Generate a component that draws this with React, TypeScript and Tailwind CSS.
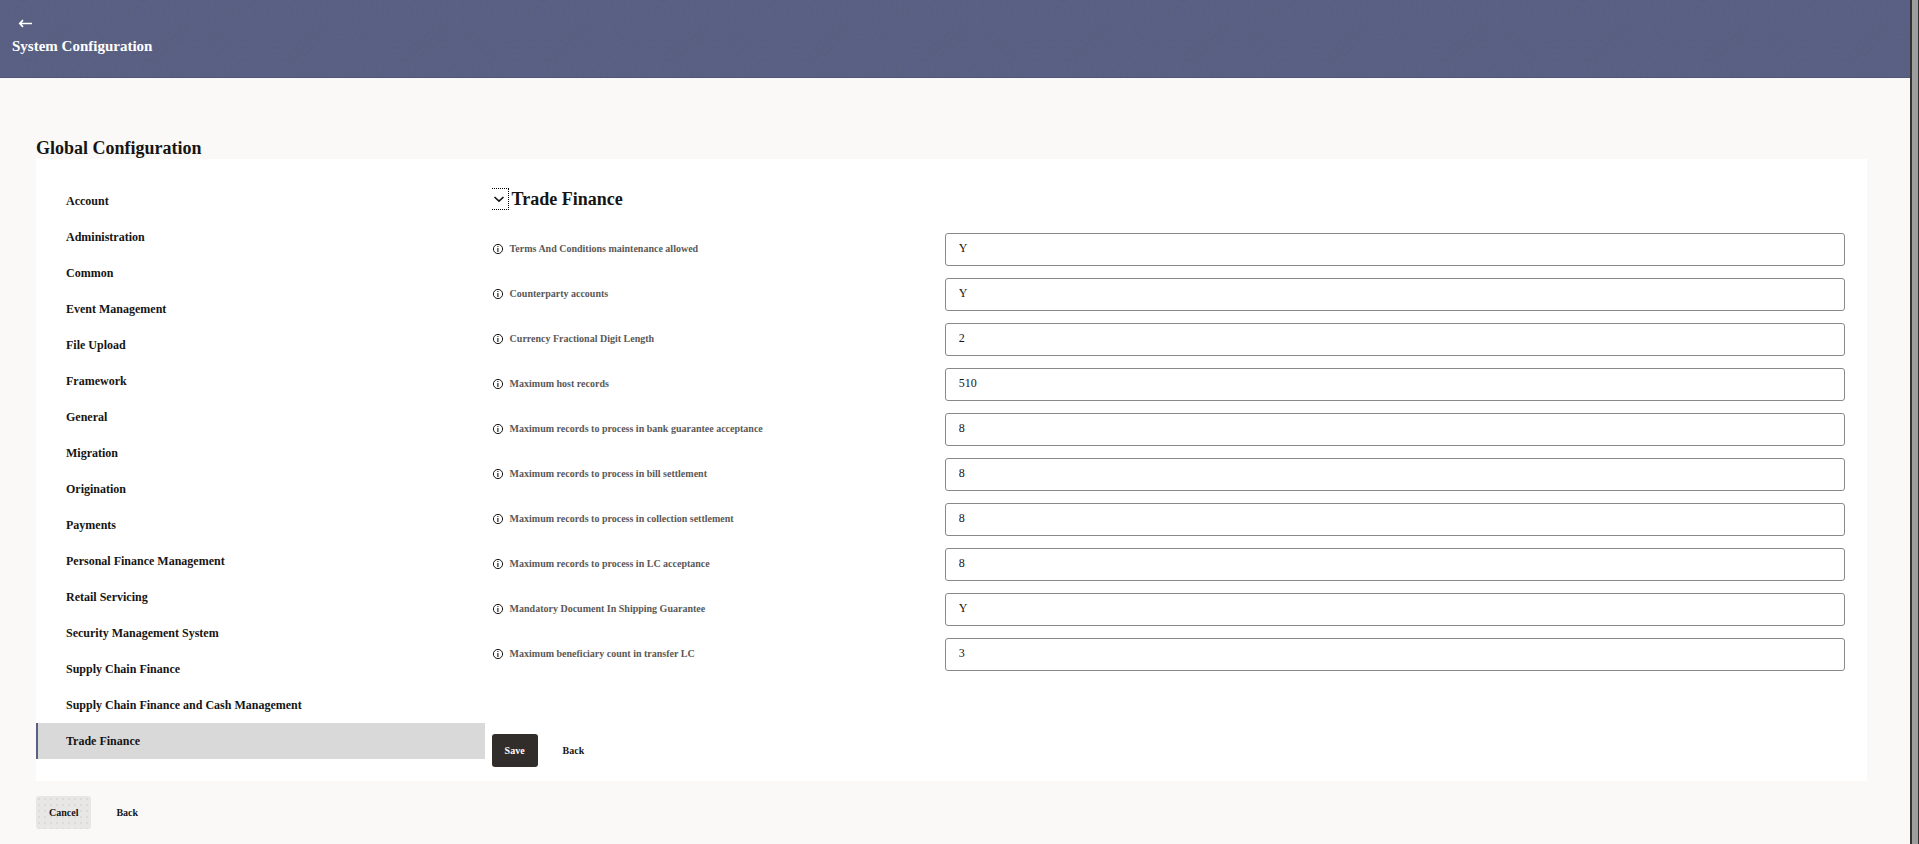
import { useState } from "react";

const categories = [
  "Account",
  "Administration",
  "Common",
  "Event Management",
  "File Upload",
  "Framework",
  "General",
  "Migration",
  "Origination",
  "Payments",
  "Personal Finance Management",
  "Retail Servicing",
  "Security Management System",
  "Supply Chain Finance",
  "Supply Chain Finance and Cash Management",
  "Trade Finance",
];

const fields = [
  { id: "terms", label: "Terms And Conditions maintenance allowed", value: "Y" },
  { id: "counterparty", label: "Counterparty accounts", value: "Y" },
  { id: "currency", label: "Currency Fractional Digit Length", value: "2" },
  { id: "host", label: "Maximum host records", value: "510" },
  { id: "guarantee", label: "Maximum records to process in bank guarantee acceptance", value: "8" },
  { id: "bill", label: "Maximum records to process in bill settlement", value: "8" },
  { id: "collection", label: "Maximum records to process in collection settlement", value: "8" },
  { id: "lc", label: "Maximum records to process in LC acceptance", value: "8" },
  { id: "shipping", label: "Mandatory Document In Shipping Guarantee", value: "Y" },
  { id: "beneficiary", label: "Maximum beneficiary count in transfer LC", value: "3" },
];

const rippleCenters = [20, 75, 140, 190, 250];

function InfoIcon() {
  return (
    <svg width="12" height="12" viewBox="0 0 12 12" fill="none" className="shrink-0" aria-hidden="true">
      <circle cx="6" cy="6" r="4.6" stroke="#161513" strokeWidth="1" />
      <path d="M5.9 3v1.1M5.9 5v4" stroke="#161513" strokeWidth="1.1" />
    </svg>
  );
}

function HeaderTexture() {
  return (
    <svg className="absolute inset-0 h-full w-full" aria-hidden="true">
      <defs>
        <pattern id="ripples" width="260" height="78" patternUnits="userSpaceOnUse">
          <g fill="none" stroke="#535a72" strokeWidth="1" strokeDasharray="9 2" opacity="0.45">
            {rippleCenters.map((cx, i) =>
              [6, 12, 18, 24, 30, 36, 42, 48].map((r) => (
                <circle key={`${cx}-${r}`} cx={cx} cy={i % 2 === 0 ? 12 : 76} r={r} />
              )),
            )}
          </g>
        </pattern>
      </defs>
      <rect width="100%" height="100%" fill="url(#ripples)" />
    </svg>
  );
}

function Header() {
  return (
    <header className="relative h-[78px] border-b border-[#4f5678] bg-[#5a6083] text-white">
      <HeaderTexture />
      <div className="relative flex flex-col items-start px-3 pt-4">
        <button type="button" aria-label="Go back" className="ml-1.5 flex h-4 w-4 items-center">
          <svg width="16" height="16" viewBox="0 0 16 16" fill="none">
            <path d="M14 7.5H2M5 4.2 1.8 7.5 5 10.8" stroke="white" strokeWidth="1.7" />
          </svg>
        </button>
        <h1 className="mt-1 text-[15px] leading-5 font-bold">System Configuration</h1>
      </div>
    </header>
  );
}

type SidebarProps = {
  active: string;
  onSelect: (name: string) => void;
};

function Sidebar({ active, onSelect }: SidebarProps) {
  return (
    <nav aria-label="Configuration categories" className="w-[24.5%] shrink-0 pt-6 pb-[22px]">
      <ul>
        {categories.map((name) => (
          <li key={name}>
            <button
              type="button"
              onClick={() => onSelect(name)}
              className={
                name === active
                  ? "block h-9 w-full border-l-2 border-[#5a6083] bg-[#d9d9d9] pl-7 text-left text-[12px] font-bold"
                  : "block h-9 w-full border-l-2 border-transparent pl-7 text-left text-[12px] font-bold"
              }
            >
              {name}
            </button>
          </li>
        ))}
      </ul>
    </nav>
  );
}

function ConfigForm({ title }: { title: string }) {
  const [open, setOpen] = useState(true);

  return (
    <form className="flex flex-1 flex-col pt-[29px] pr-[22px] pb-3.5 pl-[7px]">
      <div className="flex items-center gap-[3px]">
        <button
          type="button"
          aria-label="Toggle section"
          aria-expanded={open}
          onClick={() => setOpen(!open)}
          className="flex h-[22px] w-[17px] items-center border border-l-0 border-dotted border-black"
        >
          <svg width="14" height="14" viewBox="0 0 14 14" fill="none">
            <path d="M2.5 5 7 9.2 11.5 5" stroke="#161513" strokeWidth="1.6" />
          </svg>
        </button>
        <h3 className="text-[18px] leading-[22px] font-bold">{title}</h3>
      </div>

      {open && (
        <div className="mt-[23px] flex flex-col gap-3">
          {fields.map((field) => (
            <div key={field.id} className="grid grid-cols-[1fr_2fr] items-center gap-[3px]">
              <div className="flex items-center gap-1.5 pb-0.5">
                <InfoIcon />
                <label htmlFor={field.id} className="text-[10px] leading-4 font-bold text-[#5b5957]">
                  {field.label}
                </label>
              </div>
              <input
                id={field.id}
                type="text"
                defaultValue={field.value}
                className="h-[33px] w-full min-w-0 rounded-[3px] border border-[#8b8986] bg-white px-[13px] pb-0.5 text-[12px]"
              />
            </div>
          ))}
        </div>
      )}

      <div className="mt-auto flex">
        <button type="submit" className="h-[33px] rounded-[3px] bg-[#312d2a] px-[13px] text-[10px] font-bold text-white">
          Save
        </button>
        <button type="button" className="ml-3 h-[33px] px-[13px] text-[10px] font-bold">
          Back
        </button>
      </div>
    </form>
  );
}

export default function App() {
  const [active, setActive] = useState("Trade Finance");

  return (
    <div className="flex min-h-screen bg-[#fbf9f8] font-['Liberation_Serif',serif] text-[#161513]">
      <div className="min-w-0 flex-1">
        <Header />
        <main className="pt-[60px] pr-[43px] pb-[15px] pl-9">
          <h2 className="text-[18px] leading-[21px] font-bold">Global Configuration</h2>
          <div className="flex bg-white">
            <Sidebar active={active} onSelect={setActive} />
            <ConfigForm title={active} />
          </div>
          <div className="mt-[15px] flex">
            <button
              type="button"
              className="h-[33px] rounded-[3px] bg-[#e9e7e6] bg-[radial-gradient(#dddbda_1px,transparent_1px)] bg-[length:6px_6px] px-[13px] text-[10px] font-bold"
            >
              Cancel
            </button>
            <button type="button" className="ml-3 h-[33px] px-[13px] text-[10px] font-bold">
              Back
            </button>
          </div>
        </main>
      </div>
      <div className="w-[9px] shrink-0 border-r border-l-2 border-[#333333] bg-[#9e9e9e]" />
    </div>
  );
}
